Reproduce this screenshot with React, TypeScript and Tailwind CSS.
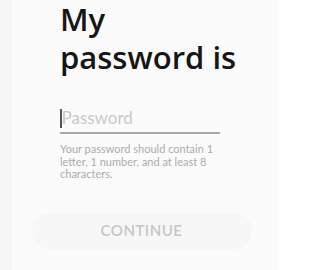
import React from "react";

const App: React.FC = () => {
    return (
        <div
            className="flex h-[270px] w-[279px] overflow-hidden bg-[#f6f6f6]"
            style={{ fontFamily: 'Lato, "Liberation Sans", sans-serif' }}
        >
            <div className="w-[12px] shrink-0" />
            <div className="flex flex-1 flex-col bg-[#fbfbfb]">
                <div className="pl-[48px] pr-[20px]">
                    <h1
                        className="text-[31px] font-semibold leading-[38px] text-[#161616]"
                        style={{ fontFamily: '"Open Sans", Lato, sans-serif' }}
                    >
                        My
                        <br />
                        password is
                    </h1>
                    <div className="mt-[31px] w-[160px] border-b-2 border-[#a9a9a9] pb-[3px]">
                        <div className="flex items-center">
                            <span className="h-[19px] w-[1.5px] bg-[#555]" />
                            <span className="text-[17px] leading-[22px] text-[#c9c9c9]">
                                Password
                            </span>
                        </div>
                    </div>
                    <p className="mt-[9px] w-[160px] text-[11px] leading-[12.5px] text-[#ababab]">
                        Your password should contain 1 letter, 1 number, and at least 8
                        characters.
                    </p>
                </div>
                <div className="mt-[32px] flex justify-center pr-[8px]">
                    <button className="flex h-[36px] w-[220px] items-center justify-center rounded-full bg-[#f7f7f7] text-[15px] font-semibold tracking-[0.5px] text-[#c6c6c6]">
                        CONTINUE
                    </button>
                </div>
            </div>
        </div>
    );
};

export default App;
